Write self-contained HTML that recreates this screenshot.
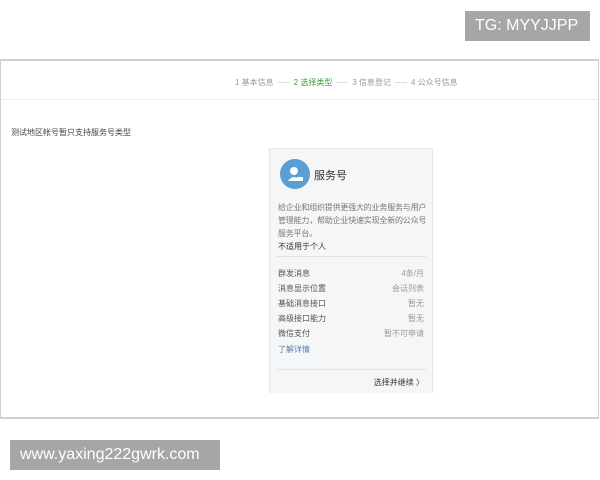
<!DOCTYPE html>
<html><head><meta charset="utf-8"><style>
*{margin:0;padding:0;box-sizing:border-box}
body{width:600px;height:480px;background:#fff;position:relative;overflow:hidden;font-family:"Liberation Sans","Noto Sans CJK SC",sans-serif;color:#333}
.wm{position:absolute;background:#a6a6a6;color:#fff;font-size:16px;line-height:30px;padding:0 10px}
.frame{position:absolute;left:0;top:59px;width:599px;height:360px;border:1px solid #d0d0d0;border-top-width:2px;border-bottom-width:2px}
.steps{position:absolute;top:16px;left:234px;font-size:8px;color:#999;white-space:nowrap}
.steps .on{color:#3a9e3a}
.steps .ln{display:inline-block;width:12px;border-top:1px solid #ddd;vertical-align:middle;margin:0 4px}
.hl{position:absolute;top:38px;left:0;right:0;border-top:1px solid #eee}
.note{position:absolute;left:10px;top:66px;font-size:8px;color:#444}
.card{position:absolute;left:268px;top:87px;width:164px;height:245px;background:#f5f6f8;border:1px solid #e6e6e6;border-bottom:none;font-size:8px;color:#555}
.ic{position:absolute;left:10px;top:10px;width:30px;height:30px;border-radius:50%;background:#5a9fd4}
.t{position:absolute;left:44px;top:18px;font-size:11px;color:#333}
.desc{position:absolute;left:8px;top:52px;width:160px;line-height:13px;color:#777;letter-spacing:-0.2px}
.na{position:absolute;left:8px;top:92px;color:#333}
.sep{position:absolute;left:6px;right:6px;border-top:1px solid #e3e3e3}
.row{position:absolute;left:8px;right:8px;display:flex;justify-content:space-between}
.row span:last-child{color:#999}
.more{position:absolute;left:8px;top:195px;color:#5a7ea8}
.go{position:absolute;right:8px;top:228px;color:#333}
</style></head><body>
<div class="wm" style="left:465px;top:11px;width:125px">TG: MYYJJPP</div>
<div class="frame">
<div class="steps">1 基本信息<span class="ln"></span><span class="on">2 选择类型</span><span class="ln"></span>3 信息登记<span class="ln"></span>4 公众号信息</div>
<div class="hl"></div>
<div class="note">测试地区帐号暂只支持服务号类型</div>
<div class="card">
<div class="ic"><svg width="30" height="30"><circle cx="14" cy="12" r="4" fill="#fff"/><path d="M8 22 q6-8 12 0z" fill="#fff"/><rect x="17" y="18" width="6" height="4" fill="#fff"/></svg></div>
<div class="t">服务号</div>
<div class="desc">给企业和组织提供更强大的业务服务与用户<br>管理能力，帮助企业快速实现全新的公众号<br>服务平台。</div>
<div class="na">不适用于个人</div>
<div class="sep" style="top:107px"></div>
<div class="row" style="top:119px"><span>群发消息</span><span>4条/月</span></div>
<div class="row" style="top:134px"><span>消息显示位置</span><span>会话列表</span></div>
<div class="row" style="top:149px"><span>基础消息接口</span><span>暂无</span></div>
<div class="row" style="top:164px"><span>高级接口能力</span><span>暂无</span></div>
<div class="row" style="top:179px"><span>微信支付</span><span>暂不可申请</span></div>
<div class="more">了解详情</div>
<div class="sep" style="top:220px"></div>
<div class="go">选择并继续 〉</div>
</div>
</div>
<div class="wm" style="left:10px;top:440px;width:210px">www.yaxing222gwrk.com</div>
</body></html>
